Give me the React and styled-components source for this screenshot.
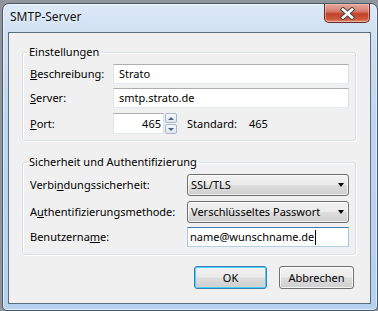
import styled, { createGlobalStyle } from "styled-components";

const GlobalStyle = createGlobalStyle`
  html, body {
    margin: 0;
    padding: 0;
  }
  body {
    width: 378px;
    height: 311px;
    overflow: hidden;
    background: #8f959b;
    font-family: "Noto Sans", "Open Sans", sans-serif;
    font-size: 11px;
    color: #000;
  }
`;

const Window = styled.div`
  box-sizing: border-box;
  width: 376px;
  height: 308px;
  margin: 3px 0 0 2px;
  border: 1px solid #4b5866;
  border-radius: 7px 7px 5px 5px;
  background: linear-gradient(180deg, #dce9f6 0%, #cfe0f2 10%, #bcd5ef 40%, #b6d1ef 100%);
  box-shadow: inset 0 0 0 1px rgba(255, 255, 255, 0.55);
  display: flex;
  flex-direction: column;
`;

const TitleBar = styled.div`
  height: 28px;
  display: flex;
  align-items: flex-start;
`;

const Title = styled.div`
  margin: 5px 0 0 7px;
  line-height: 16px;
  font-size: 12px;
  color: #111;
  text-shadow: 0 0 6px rgba(255, 255, 255, 0.9);
`;

const CloseButton = styled.div`
  margin-left: auto;
  margin-right: 7px;
  width: 46px;
  height: 19px;
  box-sizing: border-box;
  border: 1px solid #6a2d24;
  border-top: none;
  border-radius: 0 0 5px 5px;
  background: linear-gradient(180deg, #e8a89d 0%, #d6806f 40%, #c2412a 55%, #cd5a3d 85%, #e09378 100%);
  box-shadow: inset 0 0 0 1px rgba(255, 210, 200, 0.5);
  display: flex;
  align-items: center;
  justify-content: center;
`;

const Client = styled.div`
  flex: 1;
  margin: 0 6px 6px 5px;
  border: 1px solid #5d6d7e;
  background: #f0f0f0;
  padding: 11px 14px 0 13px;
  display: flex;
  flex-direction: column;
`;

const Group = styled.fieldset`
  margin: 0 0 ${(p) => p.$gap || 0}px 0;
  padding: 4px 6px ${(p) => p.$bottom}px 7px;
  border: 1px solid #d5dfe5;
  border-radius: 3px;
  box-shadow: inset 1px 1px 0 #fff, 1px 1px 0 #fff;
  display: flex;
  flex-direction: column;
`;

const Legend = styled.legend`
  padding: 0 2px;
  margin-left: -3px;
  line-height: 16px;
  font-size: 11px;
  color: #000;
`;

const Row = styled.div`
  display: grid;
  grid-template-columns: ${(p) => p.$label}px 1fr;
  align-items: center;
  margin-top: ${(p) => p.$top || 0}px;
`;

const Label = styled.div`
  line-height: 16px;
  white-space: nowrap;
`;

const TextBox = styled.div`
  box-sizing: border-box;
  height: ${(p) => p.$h || 20}px;
  width: ${(p) => (p.$w ? `${p.$w}px` : "auto")};
  border: 1px solid;
  border-color: ${(p) =>
    p.$focused ? "#3d7bad #a4c9e3 #b5cfe7 #a4c9e3" : "#abadb3 #dbdfe6 #e3e9ef #e2e3ea"};
  background: #fff;
  padding: 0 ${(p) => p.$pad ?? 5}px;
  display: flex;
  align-items: center;
  justify-content: ${(p) => (p.$right ? "flex-end" : "flex-start")};
  line-height: 16px;
  white-space: nowrap;
`;

const Caret = styled.span`
  display: inline-block;
  width: 1px;
  height: 15px;
  background: #000;
  margin-left: 1px;
`;

const PortLine = styled.div`
  display: flex;
  align-items: center;
`;

const Spin = styled.div`
  display: flex;
  flex-direction: column;
  gap: 1px;
  margin-left: 1px;
  height: 21px;
`;

const SpinButton = styled.div`
  box-sizing: border-box;
  width: 12px;
  height: 10px;
  border: 1px solid #a9b7c9;
  border-radius: 2px;
  background: linear-gradient(180deg, #f4f7fb 0%, #dde6f0 100%);
  display: flex;
  align-items: center;
  justify-content: center;

  &::after {
    content: "";
    border-left: 3px solid transparent;
    border-right: 3px solid transparent;
    ${(p) => (p.$up ? "border-bottom: 3px solid #4d6185;" : "border-top: 3px solid #4d6185;")}
  }
`;

const DefaultText = styled.span`
  margin-left: ${(p) => p.$ml}px;
  line-height: 16px;
`;

const Select = styled.div`
  box-sizing: border-box;
  height: ${(p) => p.$h}px;
  border: 1px solid #707070;
  border-radius: 3px;
  background: linear-gradient(180deg, #f2f2f2 0%, #ebebeb 48%, #dddddd 52%, #cfcfcf 100%);
  box-shadow: inset 0 0 0 1px rgba(255, 255, 255, 0.7);
  padding: 0 4px 0 3px;
  display: flex;
  align-items: center;
  justify-content: space-between;
  line-height: 16px;
  white-space: nowrap;

  &::after {
    content: "";
    border-left: 3.5px solid transparent;
    border-right: 3.5px solid transparent;
    border-top: 4px solid #000;
  }
`;

const ButtonRow = styled.div`
  display: flex;
  justify-content: flex-end;
  gap: 12px;
  margin-top: 11px;
  padding-right: 2px;
`;

const Button = styled.div`
  box-sizing: border-box;
  width: ${(p) => p.$w}px;
  height: 23px;
  border: 1px solid ${(p) => (p.$default ? "#3c7fb1" : "#707070")};
  border-radius: 3px;
  background: linear-gradient(180deg, #f2f2f2 0%, #ebebeb 48%, #dddddd 52%, #cfcfcf 100%);
  box-shadow: inset 0 0 0 1px ${(p) => (p.$default ? "#48d1ff" : "rgba(255, 255, 255, 0.75)")};
  display: flex;
  align-items: center;
  justify-content: center;
  line-height: 16px;
`;

const CloseGlyph = () => (
  <svg width="15" height="13" viewBox="0 0 15 13">
    <path d="M3 2.5 L12 10.5 M12 2.5 L3 10.5" stroke="#4a4a4a" strokeWidth="4.6" strokeLinecap="square" />
    <path d="M3 2.5 L12 10.5 M12 2.5 L3 10.5" stroke="#fff" strokeWidth="2.6" strokeLinecap="square" />
  </svg>
);

export default function App() {
  return (
    <>
      <GlobalStyle />
      <Window>
        <TitleBar>
          <Title>SMTP-Server</Title>
          <CloseButton>
            <CloseGlyph />
          </CloseButton>
        </TitleBar>
        <Client>
          <Group $bottom={6} $gap={13}>
            <Legend>Einstellungen</Legend>
            <Row $label={83}>
              <Label>
                <u>B</u>eschreibung:
              </Label>
              <TextBox>Strato</TextBox>
            </Row>
            <Row $label={83} $top={4}>
              <Label>
                <u>S</u>erver:
              </Label>
              <TextBox>smtp.strato.de</TextBox>
            </Row>
            <Row $label={83} $top={5}>
              <Label>
                <u>P</u>ort:
              </Label>
              <PortLine>
                <TextBox $w={51} $h={21} $right $pad={2}>
                  465
                </TextBox>
                <Spin>
                  <SpinButton $up />
                  <SpinButton />
                </Spin>
                <DefaultText $ml={10}>Standard:</DefaultText>
                <DefaultText $ml={12}>465</DefaultText>
              </PortLine>
            </Row>
          </Group>
          <Group $bottom={7}>
            <Legend>Sicherheit und Authentifizierung</Legend>
            <Row $label={157}>
              <Label>
                Verbi<u>n</u>dungssicherheit:
              </Label>
              <Select $h={22}>SSL/TLS</Select>
            </Row>
            <Row $label={157} $top={5}>
              <Label>
                A<u>u</u>thentifizierungsmethode:
              </Label>
              <Select $h={22}>Verschlüsseltes Passwort</Select>
            </Row>
            <Row $label={157} $top={4}>
              <Label>
                Benutzerna<u>m</u>e:
              </Label>
              <TextBox $focused $pad={2}>
                name@wunschname.de
                <Caret />
              </TextBox>
            </Row>
          </Group>
          <ButtonRow>
            <Button $w={73} $default>
              OK
            </Button>
            <Button $w={75}>Abbrechen</Button>
          </ButtonRow>
        </Client>
      </Window>
    </>
  );
}
